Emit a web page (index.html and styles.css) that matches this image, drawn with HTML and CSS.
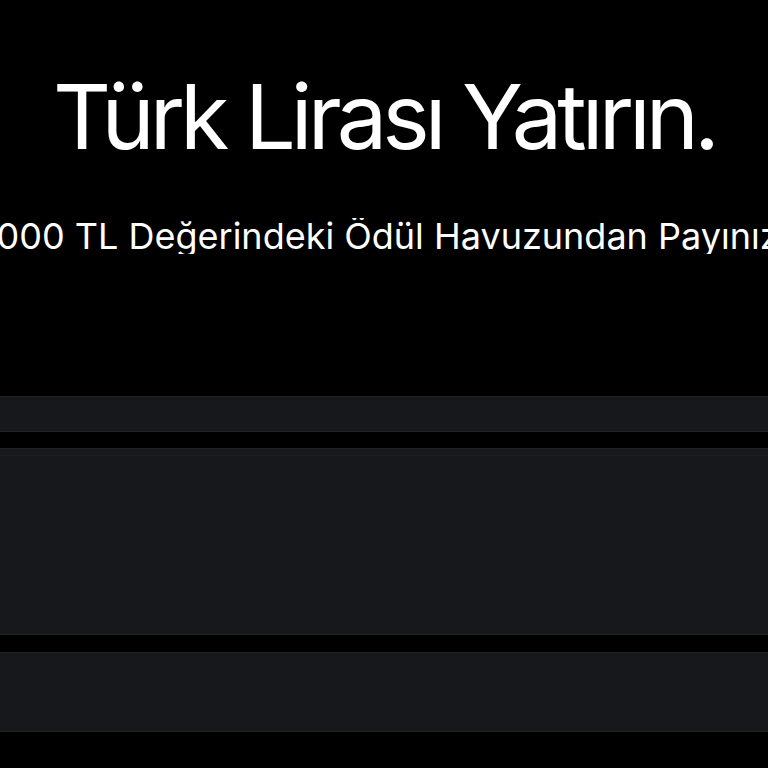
FILE: index.html
```html
<!DOCTYPE html>
<html lang="tr">
<head>
<meta charset="utf-8">
<title>Türk Lirası Yatırın.</title>
<link rel="stylesheet" href="styles.css">
</head>
<body>
<main class="page">
  <section class="hero">
    <h1 class="hero-title">Türk Lirası Yatırın.</h1>
    <div class="hero-sub-wrap">
      <p class="hero-sub">1.000.000 TL Değerindeki Ödül Havuzundan Payınızı Alın!</p>
    </div>
  </section>
  <section class="cards">
    <div class="card card-tabs"></div>
    <div class="card card-main"><div class="card-main-head"></div></div>
    <div class="card card-foot"></div>
  </section>
</main>
</body>
</html>
```
FILE: styles.css
```css
html, body {
  margin: 0;
  padding: 0;
  background: #000;
}
body {
  font-family: Inter, "Liberation Sans", Arial, sans-serif;
  color: #fff;
  overflow: hidden;
}
.page {
  width: 768px;
  height: 768px;
  overflow: hidden;
}
.hero {
  padding-top: 72px;
  display: flex;
  flex-direction: column;
  align-items: center;
}
.hero-title {
  margin: 0;
  font-size: 90px;
  line-height: 1;
  font-weight: 400;
  letter-spacing: -0.055em;
  white-space: nowrap;
}
.hero-sub-wrap {
  width: 768px;
  display: flex;
  justify-content: center;
  margin-top: 56px;
  overflow: hidden;
}
.hero-sub {
  margin: 0;
  flex: none;
  font-size: 36px;
  line-height: 1;
  white-space: nowrap;
}
.cards {
  margin-top: 142px;
  display: flex;
  flex-direction: column;
}
.card {
  background: #17181c;
  border-top: 1px solid #1f2125;
  border-bottom: 1px solid #1f2125;
  box-sizing: border-box;
}
.card-tabs {
  height: 36px;
}
.card-main {
  margin-top: 16px;
  height: 187px;
}
.card-main-head {
  height: 6px;
  border-bottom: 1px solid #1c1e22;
}
.card-foot {
  margin-top: 17px;
  height: 80px;
}
```
